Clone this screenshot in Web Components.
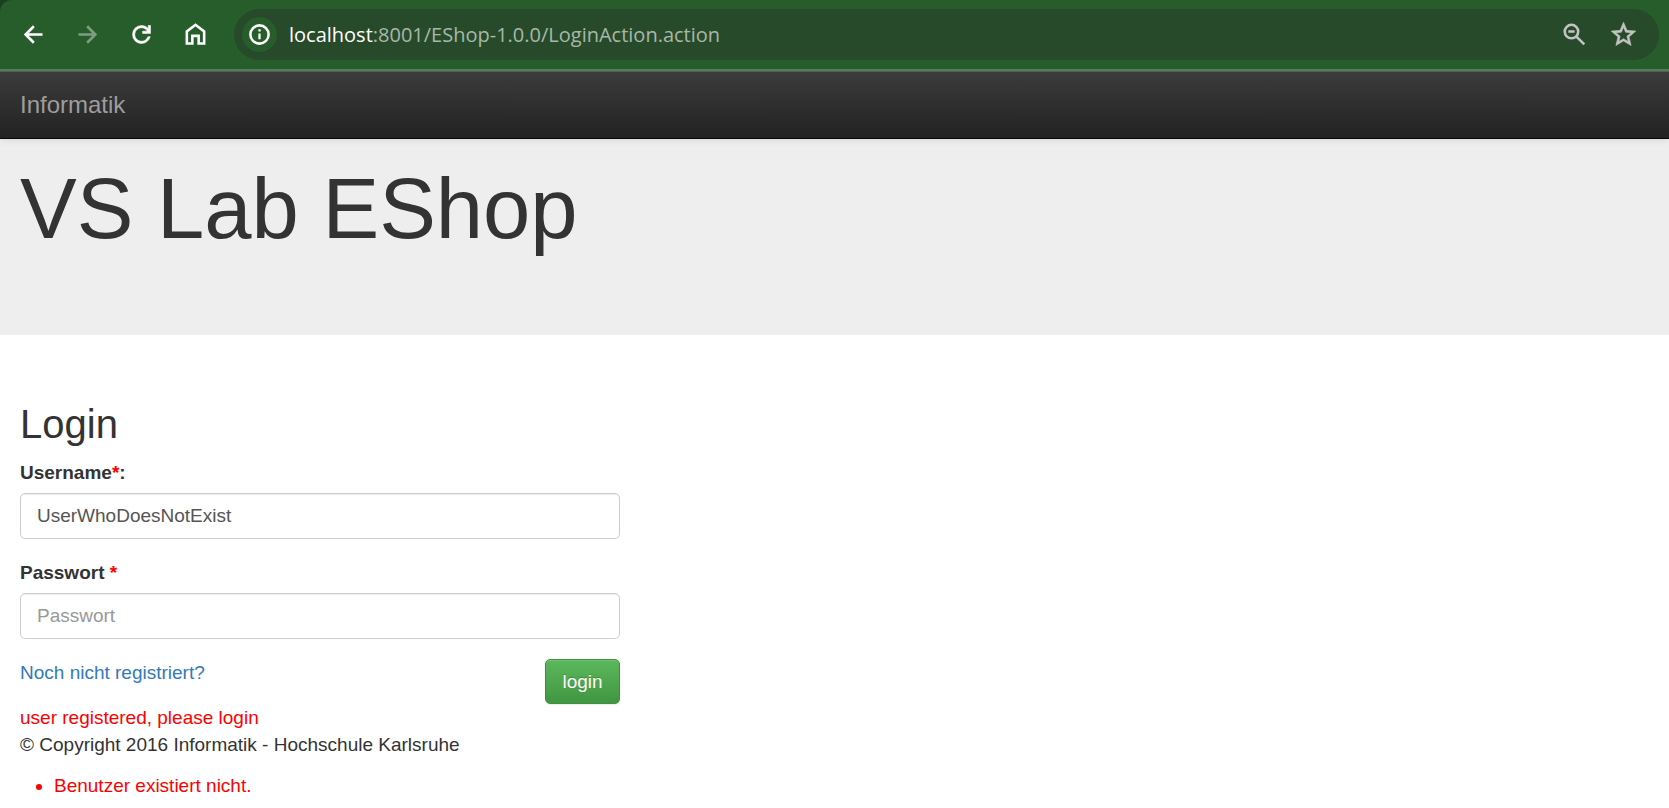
<!DOCTYPE html>
<html lang="de">
<head>
<meta charset="utf-8">
<title>VS Lab EShop</title>
<style>
  body { margin: 0; background: #fff; color: #333; font: 19px/27px "Liberation Sans", Arial, sans-serif; }
</style>
</head>
<body>
<browser-bar></browser-bar>
<shop-navbar>Informatik</shop-navbar>
<shop-banner>VS Lab EShop</shop-banner>
<main>
  <login-form></login-form>
  <shop-footer>© Copyright 2016 Informatik - Hochschule Karlsruhe</shop-footer>
  <error-list><li>Benutzer existiert nicht.</li></error-list>
</main>
<script>
const define = (name, html) => customElements.define(name, class extends HTMLElement {
  constructor() {
    super();
    const t = document.createElement('template');
    t.innerHTML = html;
    this.attachShadow({ mode: 'open' }).append(t.content.cloneNode(true));
  }
});

define('browser-bar', `
<style>
  :host { display: block; background: #1c3f1f; border-bottom: 2px solid #53835a; }
  nav { display: flex; align-items: center; gap: 27px; background: #275d2b; border-top-left-radius: 12px; padding: 9px 10px 9px 20px; }
  button { display: flex; border: 0; padding: 0; margin: 0; background: none; color: #fff; }
  button:disabled { color: #7d9e80; }
  svg { width: 27px; height: 27px; display: block; fill: none; stroke: currentColor; stroke-width: 2.3; }
  svg.solid { fill: currentColor; stroke-width: .5; }
  .omni { flex: 1; display: flex; align-items: center; gap: 22px; box-sizing: border-box; height: 51px; border-radius: 26px; background: #274a2a; padding: 0 22px 0 8px; margin-left: -2px; }
  .info { width: 35px; height: 35px; border-radius: 50%; background: #275d2b; align-items: center; justify-content: center; }
  .url { flex: 1; margin-left: -10px; font: 20px/27px "Open Sans", "Noto Sans", sans-serif; color: #a8b7a9; outline: 0; white-space: nowrap; }
  .url b { font-weight: 400; color: #fff; }
  .tool { color: #c3c3c3; }
</style>
<nav aria-label="Browser">
  <button aria-label="Back"><svg viewBox="0 0 24 24"><path d="M20 12H5.500M12.300 4.700 5 12l7.300 7.300"/></svg></button>
  <button aria-label="Forward" disabled><svg viewBox="0 0 24 24"><path d="M4 12h14.500M11.700 4.700 19 12l-7.300 7.300"/></svg></button>
  <button aria-label="Reload"><svg class="solid" viewBox="0 0 24 24"><path d="M12 20q-3.350 0-5.675-2.325T4 12t2.325-5.675T12 4q1.725 0 3.300.713T18 6.750V4h2v7h-7V9h4.200q-.8-1.400-2.187-2.200T12 6Q9.500 6 7.750 7.750T6 12t1.750 4.250T12 18q1.925 0 3.475-1.100T17.650 14h2.100q-.7 2.650-2.850 4.325T12 20"/></svg></button>
  <button aria-label="Home"><svg viewBox="0 0 24 24"><path d="M4.300 20V9.300L12 3.400l7.700 5.900V20h-4.900v-6.800H9.200V20z"/></svg></button>
  <div class="omni">
    <button class="info" aria-label="Site information"><svg viewBox="0 0 24 24"><circle cx="12" cy="12" r="8.100"/><path stroke-width="2" d="M12 11v5.300M12 7.400v2"/></svg></button>
    <div class="url" role="textbox" aria-label="Address" contenteditable="true" spellcheck="false"><b>localhost</b>:8001/EShop-1.0.0/LoginAction.action</div>
    <button class="tool" aria-label="Zoom out"><svg viewBox="0 0 24 24"><circle cx="9.300" cy="9.400" r="6"/><path d="m13.500 13.600 7.200 7.200M6.500 9.400h5.600"/></svg></button>
    <button class="tool" aria-label="Bookmark"><svg class="solid" viewBox="1 1 22 22"><path d="M22 9.240l-7.190-.62L12 2 9.190 8.630 2 9.240l5.460 4.730L5.820 21 12 17.270 18.180 21l-1.630-7.030L22 9.240zM12 15.400l-3.760 2.270 1-4.280-3.320-2.880 4.380-.38L12 6.100l1.710 4.040 4.380.38-3.320 2.880 1 4.280L12 15.400z"/></svg></button>
  </div>
</nav>`);

define('shop-navbar', `
<style>
  :host { display: block; position: relative; padding: 20px; background: linear-gradient(#3c3c3c, #222); border-bottom: 1px solid #080808; box-shadow: inset 0 1px 0 rgba(255,255,255,.15), 0 1px 7px rgba(0,0,0,.1); }
  a { display: block; width: max-content; font-size: 24px; line-height: 27px; color: #9d9d9d; text-decoration: none; }
</style>
<a href="#"><slot></slot></a>`);

define('shop-banner', `
<style>
  :host { display: block; background: #eee; padding: 27px 20px 84px; margin-bottom: 67px; }
  h1 { margin: 0; font-size: 85px; line-height: 85px; font-weight: 400; }
</style>
<h1><slot></slot></h1>`);

define('form-field', `
<style>
  :host { display: block; margin-bottom: 20px; }
  label { display: block; font-weight: 700; margin-bottom: 7px; }
  span { color: red; }
  input { display: block; box-sizing: border-box; width: 100%; height: 46px; padding: 8px 16px; border: 1px solid #ccc; border-radius: 5px; background: #fff; color: #555; font: inherit; box-shadow: inset 0 1px 1px rgba(0,0,0,.075); outline: 0; }
  input::placeholder { color: #999; opacity: 1; }
</style>
<label for="f"><slot></slot><span>*</span><slot name="after"></slot></label>
<input id="f">`);

define('login-form', `
<style>
  :host { display: block; padding: 0 20px; }
  form { max-width: 600px; }
  h2 { margin: 0 0 13px; font-size: 40px; line-height: 44px; font-weight: 400; }
  .row { display: flex; justify-content: space-between; align-items: flex-start; }
  a { color: #337ab7; text-decoration: none; }
  button { min-width: 75px; height: 45px; padding: 0 16px; border: 1px solid #3e8f3e; border-radius: 5px; background: linear-gradient(#5cb85c, #419641); color: #fff; font: inherit; text-shadow: 0 -1px 0 rgba(0,0,0,.2); box-shadow: inset 0 1px 0 rgba(255,255,255,.15), 0 1px 1px rgba(0,0,0,.075); }
  p { margin: 0; color: red; }
</style>
<form>
  <h2>Login</h2>
  <form-field class="user">Username<i slot="after" style="font-style:normal">:</i></form-field>
  <form-field class="pass">Passwort </form-field>
  <div class="row"><a href="#">Noch nicht registriert?</a><button type="button">login</button></div>
  <p>user registered, please login</p>
</form>`);

define('shop-footer', `
<style>:host { display: block; padding: 0 20px; }</style>
<footer><slot></slot></footer>`);

define('error-list', `
<style>
  :host { display: block; color: red; }
  ul { margin: 14px 0 0; padding-left: 54px; }
</style>
<ul><slot></slot></ul>`);

const form = document.querySelector('login-form').shadowRoot;
form.querySelector('.user').shadowRoot.querySelector('input').value = 'UserWhoDoesNotExist';
const pass = form.querySelector('.pass').shadowRoot.querySelector('input');
pass.type = 'password';
pass.placeholder = 'Passwort';
</script>
</body>
</html>
